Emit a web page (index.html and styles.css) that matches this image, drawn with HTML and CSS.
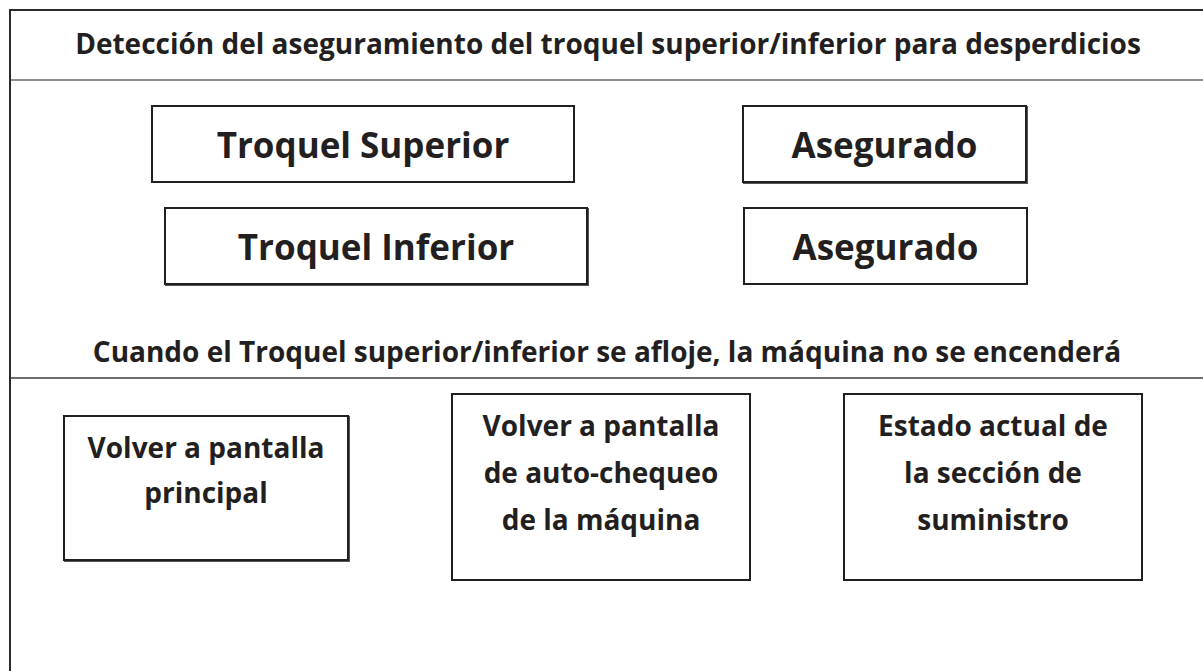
FILE: index.html
```html
<!DOCTYPE html>
<html lang="es">
  <head>
    <meta charset="UTF-8" />
    <meta name="viewport" content="width=device-width, initial-scale=1.0" />
    <link rel="stylesheet" href="styles.css">
    <title>Detección del troquel</title>
  </head>
  <body>
    <div class="frame">
      <h1 class="title">Detección del aseguramiento del troquel superior/inferior para desperdicios</h1>

      <div class="status">
        <div class="status-row row-top">
          <div class="box name">Troquel Superior</div>
          <div class="box value shadow">Asegurado</div>
        </div>
        <div class="status-row row-bottom">
          <div class="box name shadow">Troquel Inferior</div>
          <div class="box value">Asegurado</div>
        </div>
        <p class="note">Cuando el Troquel superior/inferior se afloje, la máquina no se encenderá</p>
      </div>

      <div class="actions">
        <div class="action short shadow">Volver a pantalla<br />principal</div>
        <div class="action">Volver a pantalla<br />de auto-chequeo<br />de la máquina</div>
        <div class="action">Estado actual de<br />la sección de<br />suministro</div>
      </div>
    </div>
  </body>
</html>
```

FILE: styles.css
```css
 body {
   margin: 0;
   padding: 9px 0 0 9px;
   height: 100vh;
   box-sizing: border-box;
   background: #fff;
   color: #231f20;
   font-family: 'Open Sans', Lato, sans-serif;
   font-weight: bold;
 }
 .frame {
   height: 100%;
   border-left: 2px solid #2b2b2b;
   border-top: 2px solid #2b2b2b;
 }
 .title {
   margin: 0;
   height: 68px;
   line-height: 64px;
   font-size: 28px;
   text-align: center;
   border-bottom: 2px solid #8c8c8c;
   padding-left: 2px;
 }

 .status {
   padding-top: 24px;
   border-bottom: 2px solid #6e6e6e;
 }
 .status-row {
   display: flex;
   margin-bottom: 24px;
 }
 .row-top {
   padding-left: 140px;
   gap: 167px;
 }
 .row-bottom {
   padding-left: 153px;
   gap: 155px;
 }
 .box {
   height: 74px;
   border: 2px solid #231f20;
   display: flex;
   align-items: center;
   justify-content: center;
   font-size: 35px;
 }
 .name {
   width: 420px;
 }
 .value {
   width: 281px;
 }
 .shadow {
   box-shadow: 1px 1px 0 #555;
 }
 .note {
   margin: 0;
   padding: 18px 0 2px;
   line-height: 48px;
   font-size: 28px;
   text-align: center;
 }

 .actions {
   display: flex;
   align-items: flex-start;
   padding-top: 14px;
 }
 .action {
   box-sizing: border-box;
   width: 300px;
   height: 188px;
   border: 2px solid #231f20;
   text-align: center;
   font-size: 28px;
   line-height: 47px;
   padding-top: 7px;
 }
 .action.short {
   width: 286px;
   height: 146px;
   margin: 22px 0 0 52px;
   line-height: 45px;
   padding-top: 8px;
 }
 .action:nth-child(2) {
   margin-left: 102px;
 }
 .action:nth-child(3) {
   margin-left: 92px;
 }
```
